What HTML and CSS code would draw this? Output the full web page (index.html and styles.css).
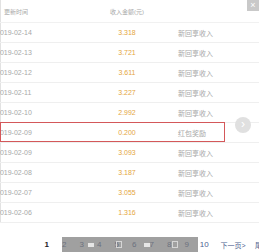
FILE: index.html
```html
<!DOCTYPE html>
<html>
<head>
<meta charset="utf-8">
<link rel="stylesheet" href="styles.css">
</head>
<body>
<div class="page">
  <div class="close">×</div>
  <div class="table">
    <div class="row head">
      <span class="c-date h">更新时间</span>
      <span class="c-amt h">收入金额(元)</span>
      <span class="c-type"></span>
    </div>
    <div class="row"><span class="c-date">2019-02-14</span><span class="c-amt">3.318</span><span class="c-type">新回享收入</span></div>
    <div class="row"><span class="c-date">2019-02-13</span><span class="c-amt">3.721</span><span class="c-type">新回享收入</span></div>
    <div class="row"><span class="c-date">2019-02-12</span><span class="c-amt">3.611</span><span class="c-type">新回享收入</span></div>
    <div class="row"><span class="c-date">2019-02-11</span><span class="c-amt">3.227</span><span class="c-type">新回享收入</span></div>
    <div class="row"><span class="c-date">2019-02-10</span><span class="c-amt">2.992</span><span class="c-type">新回享收入</span></div>
    <div class="row mark"><span class="c-date">2019-02-09</span><span class="c-amt">0.200</span><span class="c-type">红包奖励</span><span class="box"></span></div>
    <div class="row"><span class="c-date">2019-02-09</span><span class="c-amt">3.093</span><span class="c-type">新回享收入</span></div>
    <div class="row"><span class="c-date">2019-02-08</span><span class="c-amt">3.187</span><span class="c-type">新回享收入</span></div>
    <div class="row"><span class="c-date">2019-02-07</span><span class="c-amt">3.055</span><span class="c-type">新回享收入</span></div>
    <div class="row"><span class="c-date">2019-02-06</span><span class="c-amt">1.316</span><span class="c-type">新回享收入</span></div>
  </div>
  <div class="next-btn">›</div>
  <div class="pager">
    <span class="pg cur">1</span>
    <span class="pg">2</span>
    <span class="pg">3</span>
    <span class="pg">4</span>
    <span class="pg">5</span>
    <span class="pg">6</span>
    <span class="pg">7</span>
    <span class="pg">8</span>
    <span class="pg">9</span>
    <span class="pg">10</span>
    <span class="pg nx">下一页&gt;</span>
    <span class="pg last">尾页</span>
    <div class="toolbar">
      <span class="tb-rect"></span>
      <span class="tb-rect sm"></span>
      <span class="tb-rect"></span>
      <span class="tb-rect sm"></span>
    </div>
  </div>
</div>
</body>
</html>
```
FILE: styles.css
```css
html, body {
  margin: 0;
  padding: 0;
  background: #fff;
}
.page {
  position: relative;
  width: 259px;
  height: 252px;
  overflow: hidden;
  font-family: "Liberation Sans", "Noto Sans CJK SC", sans-serif;
  font-size: 7px;
  color: #a8a8a8;
}
.close {
  position: absolute;
  top: 0;
  right: 0;
  width: 12px;
  height: 11px;
  background: #c9c9c9;
  color: #fff;
  font-size: 9px;
  line-height: 11px;
  text-align: center;
}
.table {
  border-left: 1px solid #e2e2e2;
}
.row {
  position: relative;
  display: grid;
  grid-template-columns: 109px 44px 1fr;
  align-items: center;
  height: 19px;
  border-bottom: 1px solid #efefef;
  margin-left: -5px;
}
.row.head {
  height: 22px;
  border-bottom: 1px solid #f1f1f1;
}
.c-date {
  white-space: nowrap;
}
.c-date.h {
  padding-left: 8px;
  font-size: 6px;
}
.c-amt {
  text-align: center;
  color: #e5a640;
  white-space: nowrap;
}
.c-amt.h {
  color: #a8a8a8;
  font-size: 6px;
  margin-left: -20px;
  margin-right: -20px;
}
.c-type {
  padding-left: 29px;
  white-space: nowrap;
}
.box {
  position: absolute;
  left: 4px;
  top: -1px;
  width: 225px;
  height: 20px;
  border: 1.5px solid #d4585a;
  box-sizing: border-box;
}
.next-btn {
  position: absolute;
  left: 235px;
  top: 117px;
  width: 16px;
  height: 16px;
  border-radius: 50%;
  background: #e0e0e0;
  color: #fff;
  font-size: 12px;
  line-height: 15px;
  text-align: center;
}
.pager {
  position: absolute;
  left: 38px;
  top: 237px;
  width: 240px;
  height: 15px;
  display: flex;
  align-items: center;
  font-size: 8px;
}
.pg {
  width: 17.5px;
  text-align: center;
  color: #4d6190;
  flex: none;
}
.pg.cur {
  color: #222;
  font-weight: bold;
}
.pg.nx {
  width: 32px;
  margin-left: 4px;
  font-size: 7px;
}
.pg.last {
  width: 14px;
  margin-left: 6px;
  font-size: 7px;
}
.toolbar {
  position: absolute;
  left: 24px;
  top: 0;
  width: 136px;
  height: 15px;
  background: rgba(120, 120, 120, 0.7);
  display: flex;
  align-items: center;
  gap: 22px;
  padding-left: 26px;
  box-sizing: border-box;
}
.tb-rect {
  width: 6px;
  height: 4px;
  background: #e6e6e6;
}
.tb-rect.sm {
  width: 4px;
  height: 5px;
  background: none;
  border: 1px solid #d6d6d6;
}
```
